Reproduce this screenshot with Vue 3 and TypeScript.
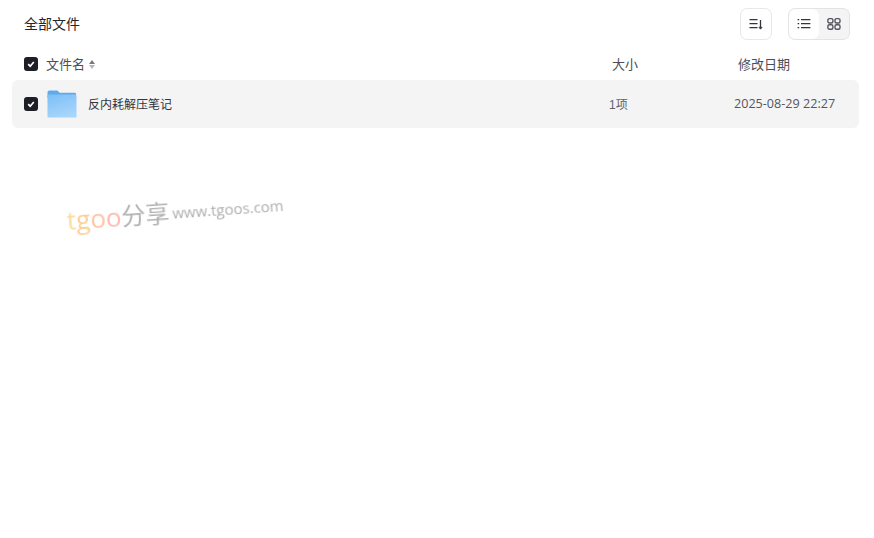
<template>
  <div class="page">
    <div class="toolbar">
      <span class="title">全部文件</span>
      <div class="tools">
        <button class="sort-btn" aria-label="排序">
          <svg width="14" height="14" viewBox="0 0 14 14" fill="none" stroke="#33343c" stroke-width="1.3">
            <path d="M0.5 2.7h8M0.5 6.7h8M0.5 10.7h8" />
            <path d="M11.5 3v8.6" />
            <path d="M9.8 10.2l1.7 2 1.7-2z" fill="#33343c" stroke-width="0.6" />
          </svg>
        </button>
        <div class="view-switch">
          <span class="view active">
            <svg width="14" height="14" viewBox="0 0 14 14" fill="none" stroke="#33343c" stroke-width="1.2">
              <path d="M0.6 2.6h1.6M0.6 6.6h1.6M0.6 10.6h1.6M4 2.6h9.4M4 6.6h9.4M4 10.6h9.4" />
            </svg>
          </span>
          <span class="view">
            <svg width="14" height="14" viewBox="0 0 14 14" fill="none" stroke="#55565e" stroke-width="1.4">
              <rect x="0.9" y="1.6" width="5" height="4.4" rx="1.5" />
              <rect x="8" y="1.6" width="5" height="4.4" rx="1.5" />
              <rect x="0.9" y="7.8" width="5" height="4.4" rx="1.5" />
              <rect x="8" y="7.8" width="5" height="4.4" rx="1.5" />
            </svg>
          </span>
        </div>
      </div>
    </div>

    <div class="row head">
      <div class="col-name">
        <span class="check"><svg width="10" height="10" viewBox="0 0 10 10"><path d="M2.2 5.2l2 2 3.6-4.2" fill="none" stroke="#fff" stroke-width="1.7" /></svg></span>
        <span class="head-label">文件名</span>
        <span class="sorter"><i class="up"></i><i class="down"></i></span>
      </div>
      <div class="col-size">大小</div>
      <div class="col-date">修改日期</div>
    </div>

    <div v-for="file in files" :key="file.name" class="row item">
      <div class="col-name">
        <span class="check"><svg width="10" height="10" viewBox="0 0 10 10"><path d="M2.2 5.2l2 2 3.6-4.2" fill="none" stroke="#fff" stroke-width="1.7" /></svg></span>
        <svg class="folder" width="30" height="30" viewBox="0 0 30 30">
          <defs>
            <linearGradient id="folderFront" x1="0.2" y1="0" x2="0.6" y2="1">
              <stop offset="0" stop-color="#7fc0f7" />
              <stop offset="1" stop-color="#a9d6fb" />
            </linearGradient>
          </defs>
          <path d="M0.5 3.5C0.5 2.3 1.3 1.5 2.5 1.5h7.2c.8 0 1.2.3 1.7.9l1.2 1.4h14.9c.9 0 1.5.5 1.5 1.4V9H0.5z" fill="#5eaaeb" />
          <rect x="0.5" y="5.6" width="29" height="23" rx="1.2" fill="url(#folderFront)" />
          <rect x="22" y="7.8" width="3.6" height="1.2" fill="#8fbfe8" />
        </svg>
        <span class="file-name">{{ file.name }}</span>
      </div>
      <div class="col-size item-size">{{ file.size }}</div>
      <div class="col-date item-date">{{ file.date }}</div>
    </div>

    <div class="watermark">
      <span class="wm-latin wm-t">t</span><span class="wm-latin wm-g">g</span><span class="wm-latin wm-o1">o</span><span class="wm-latin wm-o2">o</span><span class="wm-cn">分享</span>
      <span class="wm-url">www.tgoos.com</span>
    </div>
  </div>
</template>

<script setup lang="ts">
const files = [{ name: '反内耗解压笔记', size: '1项', date: '2025-08-29 22:27' }];
</script>

<style>
html,
body {
  margin: 0;
  background: #fff;
}
</style>

<style scoped>
.page {
  position: relative;
  height: 538px;
  box-sizing: border-box;
  padding: 0 15px 0 12px;
  font-family: "Liberation Sans", "Noto Sans CJK SC", sans-serif;
  color: #25262b;
  overflow: hidden;
}

.toolbar {
  display: flex;
  align-items: center;
  justify-content: space-between;
  height: 48px;
  padding: 0 9px 0 12px;
}

.title {
  font-size: 14px;
  line-height: 20px;
  color: #25262b;
}

.tools {
  display: flex;
  align-items: center;
  gap: 16px;
}

.sort-btn {
  display: flex;
  align-items: center;
  justify-content: center;
  box-sizing: border-box;
  width: 32px;
  height: 32px;
  padding: 0;
  background: #fff;
  border: 1px solid #e8e8ea;
  border-radius: 7px;
}

.view-switch {
  display: flex;
  box-sizing: border-box;
  width: 62px;
  height: 32px;
  background: #f4f4f5;
  border: 1px solid #e4e4e6;
  border-radius: 7px;
  overflow: hidden;
}

.view {
  flex: 1;
  display: flex;
  align-items: center;
  justify-content: center;
}

.view.active {
  background: #fff;
  border-radius: 7px;
}

.row {
  display: flex;
  align-items: center;
}

.head {
  height: 32px;
  color: #4c4d57;
  font-size: 13px;
  line-height: 18px;
}

.head .col-size,
.head .col-date,
.head-label {
  margin-top: 1px;
}

.item {
  height: 48px;
  background: #f4f4f4;
  border-radius: 6px;
  font-size: 12px;
}

.col-name {
  display: flex;
  align-items: center;
  flex: none;
  width: 597px;
  padding-left: 12px;
  box-sizing: border-box;
}

.col-size {
  flex: none;
  width: 125px;
}

.head .col-size {
  padding-left: 3px;
  box-sizing: border-box;
}

.col-date {
  flex: none;
  padding-left: 4px;
}

.check {
  display: flex;
  align-items: center;
  justify-content: center;
  width: 14px;
  height: 14px;
  background: #1e1f26;
  border-radius: 3px;
  flex: none;
}

.head-label {
  margin-left: 8px;
}

.sorter {
  display: flex;
  flex-direction: column;
  gap: 1px;
  margin-left: 4px;
  margin-top: 1px;
}

.sorter i {
  display: block;
  width: 0;
  height: 0;
  border-left: 3.5px solid transparent;
  border-right: 3.5px solid transparent;
}

.sorter .up {
  border-bottom: 4px solid #77787f;
}

.sorter .down {
  border-top: 4px solid #b5b6ba;
}

.folder {
  margin-left: 9px;
  flex: none;
}

.file-name {
  margin-left: 11px;
  margin-top: -2px;
  color: #33343c;
}

.item-size {
  margin-top: -2px;
  color: #5e5f69;
}

.item-date {
  margin-top: -2px;
  color: #55565e;
  padding-left: 0;
  font-family: "Open Sans", "Noto Sans CJK SC", sans-serif;
  font-size: 12.6px;
}

.watermark {
  position: absolute;
  left: 68px;
  top: 201px;
  display: flex;
  align-items: baseline;
  transform: rotate(-4deg);
  transform-origin: left bottom;
  font-family: "Open Sans", "Noto Sans CJK SC", sans-serif;
  font-size: 26px;
  white-space: nowrap;
  opacity: 0.9;
  filter: blur(0.3px);
}

.wm-latin {
  transform: translateY(1px);
}

.wm-t {
  color: #fbd98f;
}

.wm-g {
  color: #fcc98b;
}

.wm-o1 {
  color: #fdbf9a;
}

.wm-o2 {
  color: #fcb3a8;
}

.wm-cn {
  font-size: 24px;
  color: #a9a9a9;
}

.wm-url {
  margin-left: 3px;
  font-size: 15px;
  color: #a6a6a6;
  transform: translateY(-3px);
}
</style>
